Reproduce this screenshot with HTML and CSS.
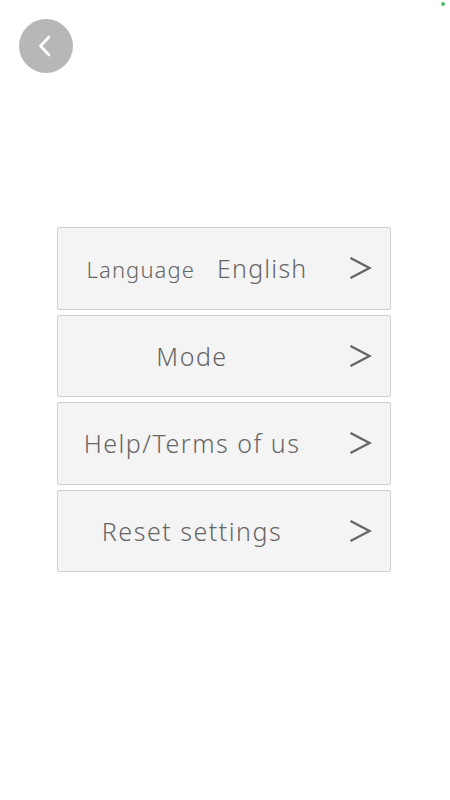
FILE: index.html
```html
<!DOCTYPE html>
<html>
<head>
<meta charset="utf-8">
<link rel="stylesheet" href="styles.css">
</head>
<body>
<div class="screen">
  <span class="dot"></span>
  <header class="top">
    <button class="back" aria-label="Back">
      <svg width="54" height="54" viewBox="0 0 54 54"><path d="M30 18 L21.5 27 L30 36" fill="none" stroke="#fff" stroke-width="2.6" stroke-linecap="round" stroke-linejoin="round"/></svg>
    </button>
  </header>
  <main class="menu">
    <div class="item"><span class="label lang"><span class="small">Language</span><span class="value">English</span></span><span class="arrow"><svg width="24" height="24" viewBox="0 0 24 24"><path d="M2.5 2 L21.5 12 L2.5 22" fill="none" stroke="#666" stroke-width="2.5" stroke-linejoin="miter"/></svg></span></div>
    <div class="item"><span class="label">Mode</span><span class="arrow"><svg width="24" height="24" viewBox="0 0 24 24"><path d="M2.5 2 L21.5 12 L2.5 22" fill="none" stroke="#666" stroke-width="2.5" stroke-linejoin="miter"/></svg></span></div>
    <div class="item"><span class="label">Help/Terms of us</span><span class="arrow"><svg width="24" height="24" viewBox="0 0 24 24"><path d="M2.5 2 L21.5 12 L2.5 22" fill="none" stroke="#666" stroke-width="2.5" stroke-linejoin="miter"/></svg></span></div>
    <div class="item"><span class="label">Reset settings</span><span class="arrow"><svg width="24" height="24" viewBox="0 0 24 24"><path d="M2.5 2 L21.5 12 L2.5 22" fill="none" stroke="#666" stroke-width="2.5" stroke-linejoin="miter"/></svg></span></div>
  </main>
</div>
</body>
</html>
```
FILE: styles.css
```css
html, body { margin: 0; padding: 0; background: #fff; }
body { font-family: "Noto Sans", "Open Sans", sans-serif; color: #666; }
.screen { position: relative; width: 450px; height: 800px; }
.dot { position: absolute; left: 441px; top: 2px; width: 4px; height: 4px; border-radius: 50%; background: #4cc46a; }
.top { padding: 19px 0 0 19px; height: 227px; box-sizing: border-box; }
.back { width: 54px; height: 54px; border-radius: 50%; background: #b7b7b7; border: 0; padding: 0; display: block; }
.back svg { display: block; }
.menu { display: flex; flex-direction: column; gap: 5px; margin: 0 59px 0 57px; }
.item { height: 82.5px; box-sizing: border-box; border: 1px solid #cfcfcf; border-radius: 2px; background: #f4f4f4; display: flex; align-items: center; }
.label { flex: 1; text-align: center; font-size: 25px; font-weight: 350; letter-spacing: 1.5px; }
.lang { padding-left: 10px; }
.small { font-size: 22px; margin-right: 22px; letter-spacing: 1.1px; }
.value { letter-spacing: 1.2px; }
.arrow { width: 64px; display: flex; justify-content: center; }
.arrow svg { display: block; margin-left: 4px; }
```
